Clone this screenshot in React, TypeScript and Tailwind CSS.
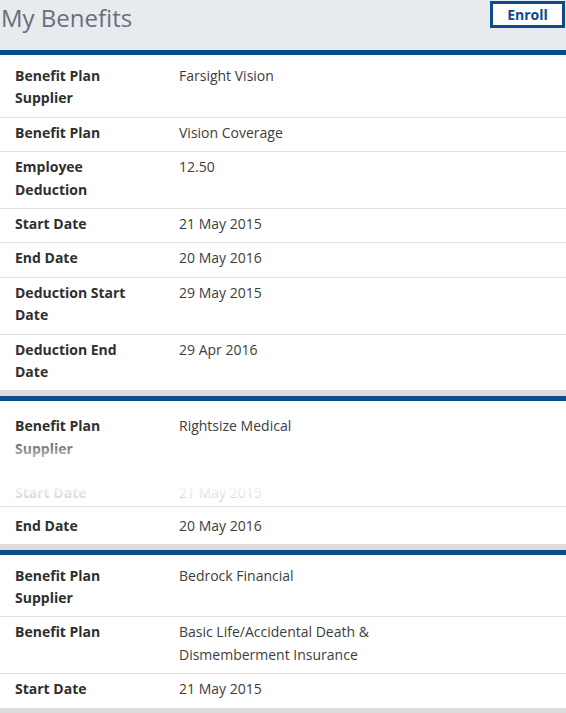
import React from "react";

type Row = { label: string; value: string };

const vision: Row[] = [
  { label: "Benefit Plan Supplier", value: "Farsight Vision" },
  { label: "Benefit Plan", value: "Vision Coverage" },
  { label: "Employee Deduction", value: "12.50" },
  { label: "Start Date", value: "21 May 2015" },
  { label: "End Date", value: "20 May 2016" },
  { label: "Deduction Start Date", value: "29 May 2015" },
  { label: "Deduction End Date", value: "29 Apr 2016" },
];

const life: Row[] = [
  { label: "Benefit Plan Supplier", value: "Bedrock Financial" },
  { label: "Benefit Plan", value: "Basic Life/Accidental Death & Dismemberment Insurance" },
  { label: "Start Date", value: "21 May 2015" },
];

const DetailRow = ({
  row,
  last,
  first,
  pad = "pt-[4px] pb-[7px]",
}: {
  row: Row;
  last?: boolean;
  first?: boolean;
  pad?: string;
}) => (
  <div
    className={`grid grid-cols-[179px_1fr] pr-4 ${first ? "pt-[10px] pb-[7px]" : pad} ${
      last ? "" : "border-b border-[#e2e2e2]"
    }`}
  >
    <div className="pl-[15px] pr-[38px] font-bold text-[#2f2f2f]">{row.label}</div>
    <div className="pr-[140px] text-[#3d3d3d]">{row.value}</div>
  </div>
);

const Card = ({ rows }: { rows: Row[] }) => (
  <div className="border-t-[5px] border-[#0a4c8f] bg-white">
    {rows.map((r, i) => (
      <DetailRow key={r.label} row={r} first={i === 0} last={i === rows.length - 1} />
    ))}
  </div>
);

const Separator = () => <div className="h-[6px] bg-[#dcdcdc]" />;

export default function App() {
  return (
    <div
      className="w-[566px] h-[713px] overflow-hidden bg-white text-[14px] leading-[1.6]"
      style={{ fontFamily: '"Open Sans", "Liberation Sans", sans-serif' }}
    >
      <div className="h-[50px] bg-[#e8ebee] flex items-start justify-between pl-[1px] pr-[1px]">
        <h1 className="text-[24px] leading-[36px] text-[#676f7c] font-normal">My Benefits</h1>
        <button className="mt-[1px] h-[27px] w-[75px] border-[3px] border-[#0a4c8f] bg-white text-[14px] font-bold text-[#0a4c8f] leading-none">
          Enroll
        </button>
      </div>

      <Card rows={vision} />
      <Separator />

      {/* collapsing card */}
      <div className="border-t-[5px] border-[#0a4c8f] bg-white">
        <div className="relative h-[86px] overflow-hidden">
          <div className="grid grid-cols-[179px_1fr] pt-[14px]">
            <div className="pl-[15px] pr-[38px] font-bold text-[#2f2f2f]">Benefit Plan Supplier</div>
            <div className="text-[#3d3d3d]">Rightsize Medical</div>
          </div>
          <div className="absolute inset-x-0 top-[34px] h-[40px] bg-gradient-to-b from-white/0 via-white/60 to-white" />
          <div className="absolute inset-x-0 top-[74px] bottom-0 bg-white" />
        </div>
        <div className="relative h-[20px] overflow-hidden border-b border-[#e2e2e2] flex flex-col justify-end">
          <div className="grid grid-cols-[179px_1fr] pb-[2px]">
            <div className="pl-[15px] font-bold text-[#2f2f2f]">Start Date</div>
            <div className="text-[#3d3d3d]">21 May 2015</div>
          </div>
          <div className="absolute inset-0 bg-gradient-to-b from-white/95 to-white/70" />
        </div>
        <DetailRow row={{ label: "End Date", value: "20 May 2016" }} last pad="pt-[8px] pb-[6px]" />
      </div>
      <Separator />

      <Card rows={life} />
      <Separator />
    </div>
  );
}
